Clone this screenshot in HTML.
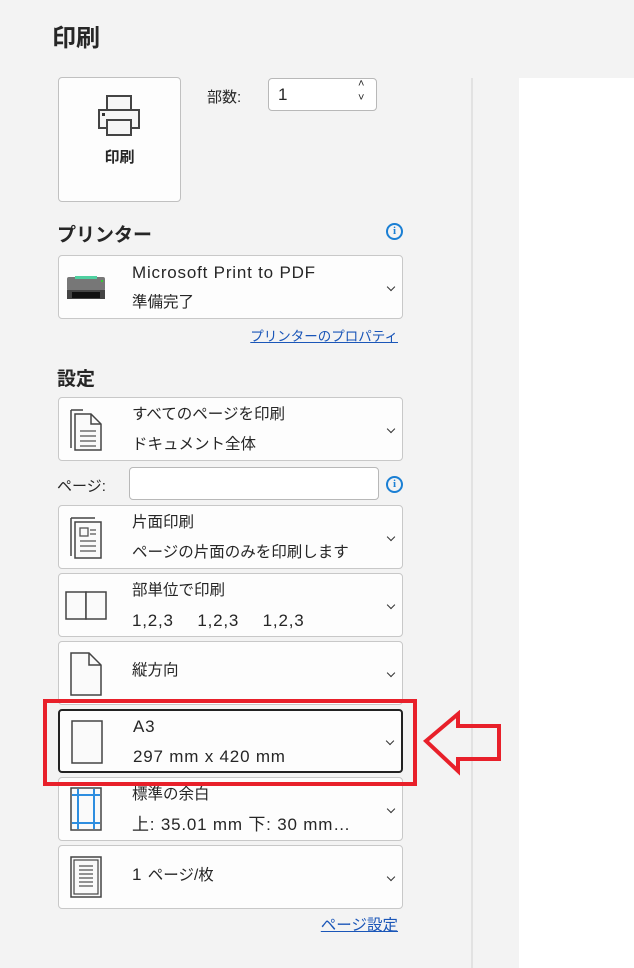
<!DOCTYPE html>
<html><head><meta charset="utf-8"><style>
*{box-sizing:border-box;margin:0;padding:0}
body{width:634px;height:968px;background:#f3f3f3;position:relative;overflow:hidden;font-family:"Liberation Sans","Noto Sans CJK JP",sans-serif;color:#262626}
.a{position:absolute}
.dd{position:absolute;left:58px;width:345px;height:64px;background:#fdfdfd;border:1px solid #c8c8c8;border-radius:4px}
.dd .t1,.dd .t2,.dd .t{position:absolute;left:73px;font-size:15.5px;line-height:20px;white-space:nowrap}
.dd .t1{top:7px}
.dd .t2{top:37px}
.dd .t{top:19px}
.L,.dd .L{font-size:17px;letter-spacing:0.8px}
.chev{position:absolute;right:8px;top:28px;width:6px;height:6px;border-right:1.5px solid #333;border-bottom:1.5px solid #333;transform:rotate(45deg)}
.h{font-weight:bold;font-size:19px;color:#262626;line-height:24px}
.lnk{color:#1a56b8;text-decoration:underline;font-size:13.5px;line-height:18px;text-align:right}
.info{width:17px;height:17px;border:2px solid #1a7fd4;border-radius:50%;color:#1a7fd4;font-size:11px;font-weight:bold;text-align:center;line-height:13px;font-family:"Liberation Serif",serif}
</style></head><body>
<div class="a" style="left:519px;top:78px;width:115px;height:890px;background:#fff"></div>
<div class="a" style="left:471px;top:78px;width:2px;height:890px;background:#e2e2e2"></div>
<div class="a h" style="left:52px;top:24px;font-size:24px;line-height:30px">印刷</div>

<div class="a" style="left:58px;top:77px;width:123px;height:125px;background:#fdfdfd;border:1px solid #c0c0c0;border-radius:4px">
<svg class="a" style="left:38px;top:16px" width="46" height="44"><rect x="10" y="2" width="24" height="14" fill="#f6f6f6" stroke="#444" stroke-width="2"/><rect x="2" y="16" width="40" height="18" fill="#f6f6f6" stroke="#444" stroke-width="2"/><rect x="5" y="19" width="3" height="3" fill="#333"/><rect x="10" y="26" width="24" height="15" fill="#f6f6f6" stroke="#444" stroke-width="2"/></svg>
<div class="a" style="left:0;width:121px;top:68px;text-align:center;font-weight:bold;font-size:15px">印刷</div>
</div>
<div class="a" style="left:207px;top:86px;font-size:15px">部数:</div>
<div class="a" style="left:268px;top:78px;width:109px;height:33px;background:#fff;border:1px solid #b8b8b8;border-radius:4px">
<div class="a L" style="left:9px;top:6px">1</div>
<div class="a" style="left:89px;top:-1px;font-size:11px">˄</div>
<div class="a" style="left:89px;top:13px;font-size:11px">˅</div>
</div>

<div class="a h" style="left:57px;top:224px">プリンター</div>
<div class="a info" style="left:386px;top:223px">i</div>
<div class="dd" style="top:255px">
<svg class="a" style="left:6px;top:17px" width="44" height="28"><rect x="2" y="4" width="38" height="14" rx="2" fill="#777"/><rect x="10" y="3" width="22" height="3" fill="#4fd0a0"/><rect x="2" y="17" width="38" height="9" fill="#444"/><rect x="7" y="19" width="28" height="6" fill="#111"/><rect x="36" y="7" width="2" height="2" fill="#3c3"/></svg>
<div class="t1 L">Microsoft Print to PDF</div><div class="t2">準備完了</div><div class="chev"></div></div>
<div class="a lnk" style="left:200px;width:198px;top:328px">プリンターのプロパティ</div>

<div class="a h" style="left:57px;top:368px">設定</div>
<div class="dd" style="top:397px">
<svg class="a" style="left:10px;top:10px" width="36" height="44"><path d="M2 2H14M2 2V40" stroke="#444" fill="none" stroke-width="1.5"/><path d="M6 6H22L32 16V42H6Z" fill="#fafafa" stroke="#444" stroke-width="1.5"/><path d="M22 6V16H32" fill="none" stroke="#444" stroke-width="1.5"/><path d="M11 23H27M11 28H27M11 33H27M11 38H27" stroke="#555" stroke-width="1.3"/></svg>
<div class="t1">すべてのページを印刷</div><div class="t2">ドキュメント全体</div><div class="chev"></div></div>
<div class="a" style="left:57px;top:475px;font-size:15px">ページ:</div>
<div class="a" style="left:129px;top:467px;width:250px;height:33px;background:#fff;border:1px solid #b8b8b8;border-radius:4px"></div>
<div class="a info" style="left:386px;top:476px">i</div>

<div class="dd" style="top:505px">
<svg class="a" style="left:10px;top:10px" width="36" height="44"><path d="M2 2H26M2 2V40" stroke="#444" fill="none" stroke-width="1.5"/><rect x="6" y="6" width="26" height="36" fill="#fafafa" stroke="#444" stroke-width="1.5"/><rect x="11" y="12" width="8" height="8" fill="none" stroke="#555" stroke-width="1.3"/><path d="M21 14H27M21 18H27M11 25H27M11 30H27M11 35H27" stroke="#555" stroke-width="1.3"/></svg>
<div class="t1">片面印刷</div><div class="t2">ページの片面のみを印刷します</div><div class="chev"></div></div>
<div class="dd" style="top:573px">
<svg class="a" style="left:6px;top:17px" width="44" height="30"><rect x="1" y="1" width="20" height="27" fill="#fafafa" stroke="#444" stroke-width="1.5"/><rect x="21" y="1" width="20" height="27" fill="#fafafa" stroke="#444" stroke-width="1.5"/></svg>
<div class="t1">部単位で印刷</div><div class="t2 L" style="word-spacing:18px">1,2,3 1,2,3 1,2,3</div><div class="chev"></div></div>
<div class="dd" style="top:641px">
<svg class="a" style="left:10px;top:9px" width="36" height="46"><path d="M2 2H20L32 14V44H2Z" fill="#fafafa" stroke="#444" stroke-width="1.5"/><path d="M20 2V14H32" fill="none" stroke="#444" stroke-width="1.5"/></svg>
<div class="t">縦方向</div><div class="chev"></div></div>
<div class="dd" style="top:709px;border:2px solid #222;">
<svg class="a" style="left:10px;top:8px" width="34" height="46"><rect x="2" y="2" width="30" height="42" fill="#fafafa" stroke="#444" stroke-width="1.5"/></svg>
<div class="t1 L" style="top:6px">A3</div><div class="t2 L" style="top:36px">297 mm x 420 mm</div><div class="chev" style="top:27px"></div></div>
<div class="dd" style="top:777px">
<svg class="a" style="left:10px;top:8px" width="34" height="46"><rect x="2" y="2" width="30" height="42" fill="#fafafa" stroke="#444" stroke-width="1.5"/><path d="M3 9H31M3 37H31M9 3V43M25 3V43" stroke="#2e8ee0" stroke-width="2"/></svg>
<div class="t1">標準の余白</div><div class="t2 L">上: 35.01 mm 下: 30 mm…</div><div class="chev"></div></div>
<div class="dd" style="top:845px">
<svg class="a" style="left:10px;top:9px" width="34" height="44"><rect x="2" y="2" width="30" height="40" fill="#fafafa" stroke="#444" stroke-width="1.5"/><rect x="5" y="5" width="24" height="34" fill="none" stroke="#444" stroke-width="1.2"/><path d="M10 11H24M10 15H24M10 19H24M10 23H24M10 27H24M10 31H24" stroke="#555" stroke-width="1.2"/></svg>
<div class="t"><span class="L">1 </span>ページ/枚</div><div class="chev"></div></div>
<div class="a lnk" style="left:250px;width:148px;top:917px;font-size:15.5px">ページ設定</div>

<div class="a" style="left:43px;top:699px;width:374px;height:87px;border:4px solid #e8202a"></div>
<svg class="a" style="left:420px;top:710px" width="86" height="66"><path d="M6 31L38 4V16H79V49H38V61Z" fill="none" stroke="#e8202a" stroke-width="4" stroke-linejoin="miter"/></svg>
</body></html>
